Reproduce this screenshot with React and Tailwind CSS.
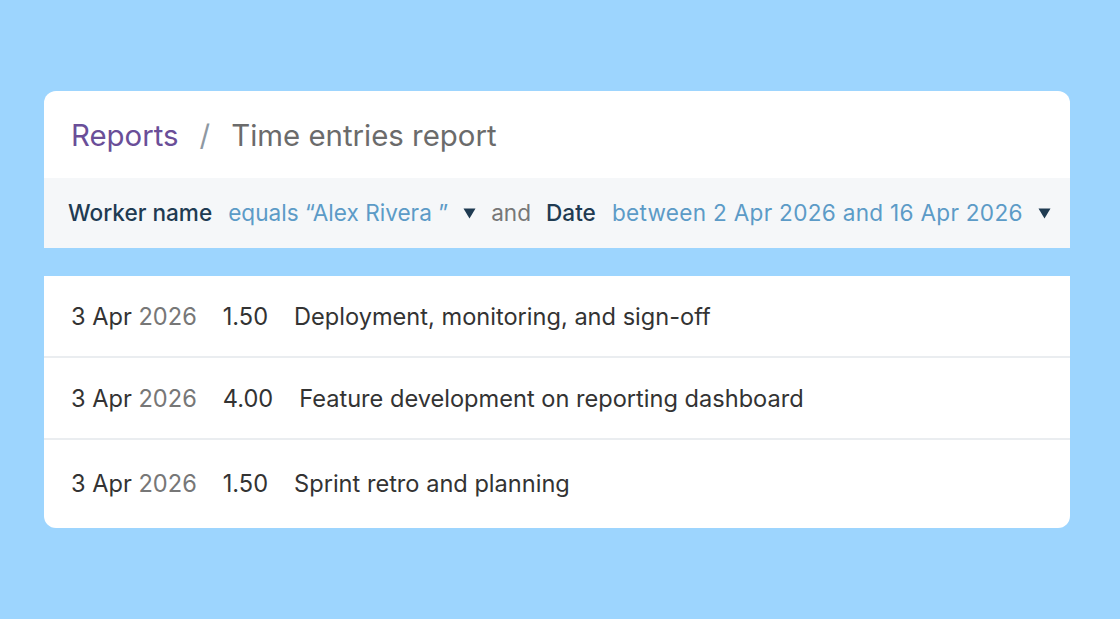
import React from "react";

const rows = [
  { day: "3 Apr", year: "2026", hours: "1.50", text: "Deployment, monitoring, and sign-off" },
  { day: "3 Apr", year: "2026", hours: "4.00", text: "Feature development on reporting dashboard" },
  { day: "3 Apr", year: "2026", hours: "1.50", text: "Sprint retro and planning" },
];

function Caret() {
  return (
    <svg width="13" height="11" viewBox="0 0 13 11" className="inline-block">
      <path d="M0.5 0.5 H12.5 L6.5 10.5 Z" fill="#1f3b52" />
    </svg>
  );
}

export default function App() {
  return (
    <div
      className="min-h-screen w-full bg-[#9dd5fe] px-[44px] pt-[91px]"
      style={{ fontFamily: "Inter, 'Noto Sans', sans-serif" }}
    >
      <div className="w-[1026px]">
        <div className="overflow-hidden rounded-t-[12px] bg-white">
          <div className="flex h-[87px] items-center pl-[27px] pt-[3px] text-[29.4px]">
            <span className="text-[#6a4e98]">Reports</span>
            <span className="ml-[21px] mr-[21px] text-[#8e98a2]">/</span>
            <span className="text-[#6b6b6b]">Time entries report</span>
          </div>
          <div className="flex h-[70px] items-center bg-[#f5f7f9] pl-[24px] text-[22.6px]">
            <span className="font-medium text-[#1f3b52]">Worker name</span>
            <span className="ml-[16px] text-[#5c9bc7]">equals “Alex Rivera ”</span>
            <span className="ml-[15px] flex items-center"><Caret /></span>
            <span className="ml-[15px] text-[#777777]">and</span>
            <span className="ml-[15px] font-medium text-[#1f3b52]">Date</span>
            <span className="ml-[16px] tracking-[0.28px] text-[#5c9bc7]">between 2 Apr 2026 and 16 Apr 2026</span>
            <span className="ml-[15px] flex items-center"><Caret /></span>
          </div>
        </div>

        <div className="mt-[28px] overflow-hidden rounded-b-[12px] bg-white">
          {rows.map((r, i) => (
            <div
              key={i}
              className={
                "flex items-center pl-[27px] text-[23.6px] text-[#333333] " +
                (i < rows.length - 1 ? "h-[82px] border-b-2 border-[#eaedf0] pt-[2px]" : "h-[88px]")
              }
            >
              <span>
                {r.day} <span className="text-[#777777]">{r.year}</span>
              </span>
              <span className="ml-[26px]">{r.hours}</span>
              <span className="ml-[26px]">{r.text}</span>
            </div>
          ))}
        </div>
      </div>
    </div>
  );
}
